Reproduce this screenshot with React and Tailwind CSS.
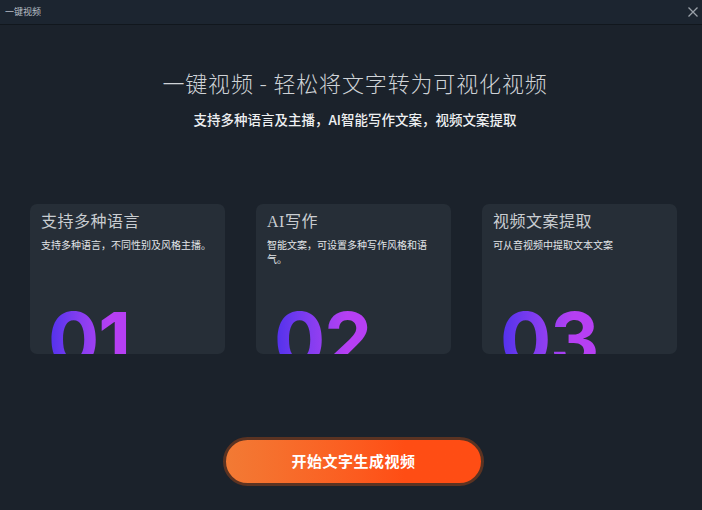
import React from 'react';

const features = [
    { no: '01', title: '支持多种语言', desc: '支持多种语言，不同性别及风格主播。' },
    { no: '02', title: 'AI写作', desc: '智能文案，可设置多种写作风格和语气。' },
    { no: '03', title: '视频文案提取', desc: '可从音视频中提取文本文案' },
];

const App = () => {
    return (
        <div className="w-[702px] h-[510px] bg-[#1b222b] flex flex-col overflow-hidden font-['Noto_Sans_CJK_SC',sans-serif]">
            <div className="h-[25px] shrink-0 flex items-center justify-between pl-[5px] pr-[3px] bg-[#1c2530] border-b border-[#11171d]">
                <span className="text-[9px] text-[#b9bfc6]">一键视频</span>
                <svg width="12" height="12" viewBox="0 0 12 12" className="text-[#9aa1a9]">
                    <path d="M1.5 1.5 L10.5 10.5 M10.5 1.5 L1.5 10.5" stroke="currentColor" strokeWidth="1.3" />
                </svg>
            </div>

            <div className="flex flex-col items-center pt-[42px] pl-[8px]">
                <h1 className="text-[22px] leading-[30px] font-light text-[#cfd3d7] tracking-[0.85px] whitespace-pre">
                    一键视频 - 轻松将文字转为可视化视频
                </h1>
                <p className="mt-[12px] text-[13.5px] leading-[20px] font-medium text-[#eef0f2]">
                    支持多种语言及主播，AI智能写作文案，视频文案提取
                </p>
            </div>

            <div className="mt-[75px] pl-[30px] flex gap-[31px]">
                {features.map((f) => (
                    <div key={f.no} className="w-[195px] h-[150px] rounded-[7px] bg-[#262e37] overflow-hidden px-[11px] pt-[5px] flex flex-col">
                        <h3 className="text-[16px] leading-[26px] text-[#c9cdd1] font-['Liberation_Serif','Noto_Sans_CJK_SC',serif] tracking-[0.5px]">
                            {f.title}
                        </h3>
                        <p className="mt-[3px] text-[10px] leading-[14px] text-[#e2e5e8]">
                            {f.desc}
                        </p>
                        <div className="mt-auto pl-[7px] h-[53px] shrink-0">
                            <span className="inline-block font-['Inter',sans-serif] font-bold text-[76px] leading-[76px] tracking-[-1px] bg-gradient-to-r from-[#5030ec] to-[#b63ff3] to-75% bg-clip-text text-transparent">
                                {f.no}
                            </span>
                        </div>
                    </div>
                ))}
            </div>

            <div className="mt-[83px] pl-[5px] flex justify-center">
                <button className="w-[261px] h-[49px] rounded-full border-[3px] border-[#5b3322] bg-gradient-to-r from-[#f27a34] to-[#ff4d14] to-70% text-white text-[15px] font-bold tracking-[0.5px]">
                    开始文字生成视频
                </button>
            </div>
        </div>
    );
};

export default App;
